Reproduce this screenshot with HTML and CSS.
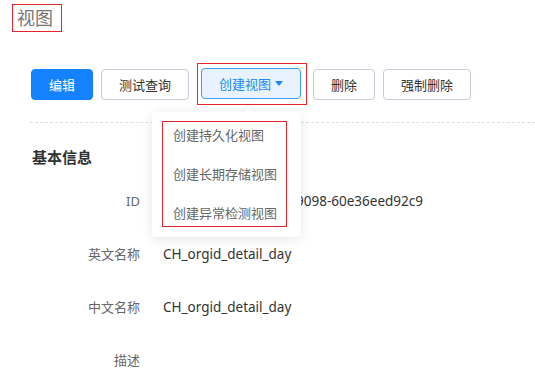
FILE: index.html
```html
<!DOCTYPE html>
<html lang="zh-CN">
<head>
    <meta charset="UTF-8">
    <meta name="viewport" content="width=device-width, initial-scale=1.0">
    <title>视图</title>
    <link rel="stylesheet" href="styles.css">
</head>
<body>
    <div class="page">
        <div class="title-box mark">
            <h1 class="title">视图</h1>
        </div>

        <div class="toolbar">
            <button type="button" class="btn btn-primary">编辑</button>
            <button type="button" class="btn">测试查询</button>
            <div class="dropdown mark">
                <button type="button" class="btn btn-active">创建视图<span class="caret"></span></button>
                <div class="dropdown-menu">
                    <ul class="menu-list mark">
                        <li>创建持久化视图</li>
                        <li>创建长期存储视图</li>
                        <li>创建异常检测视图</li>
                    </ul>
                </div>
            </div>
            <button type="button" class="btn">删除</button>
            <button type="button" class="btn">强制删除</button>
        </div>

        <div class="divider"></div>

        <section class="info">
            <h2 class="info-title">基本信息</h2>
            <div class="info-row">
                <span class="info-label">ID</span>
                <span class="info-value">4b7e21c5-a3f0-4d8e-9098-60e36eed92c9</span>
            </div>
            <div class="info-row">
                <span class="info-label">英文名称</span>
                <span class="info-value">CH_orgid_detail_day</span>
            </div>
            <div class="info-row">
                <span class="info-label">中文名称</span>
                <span class="info-value">CH_orgid_detail_day</span>
            </div>
            <div class="info-row">
                <span class="info-label">描述</span>
                <span class="info-value"></span>
            </div>
        </section>
    </div>
</body>
</html>
```

FILE: styles.css
```css
body {
    margin: 0;
    background: #fff;
    font-family: "Noto Sans", "Noto Sans CJK SC", sans-serif;
    font-size: 13px;
    color: #333;
}
.page {
    width: 535px;
    overflow: hidden;
}
/* red annotation boxes */
.mark {
    border: 1px solid #e4262c;
}
.title-box {
    display: inline-block;
    margin: 4px 0 0 12px;
    padding: 0 8px 0 4px;
}
.title {
    margin: 0;
    font-size: 18px;
    font-weight: normal;
    line-height: 26px;
    color: #777;
}
.toolbar {
    display: flex;
    align-items: center;
    gap: 8px;
    margin-top: 31px;
    padding-left: 31px;
}
.btn {
    display: inline-flex;
    align-items: center;
    height: 31px;
    padding: 0 17px;
    border: 1px solid #c8ccd8;
    border-radius: 4px;
    background: #fff;
    font-family: "Noto Sans", "Noto Sans CJK SC", sans-serif;
    font-size: 13px;
    color: #333;
    cursor: pointer;
}
.btn-primary {
    background: #1482ff;
    border-color: #1482ff;
    color: #fff;
}
.btn-active {
    background: #e8f3ff;
    border-color: #3d9df5;
    color: #1a88f5;
}
.caret {
    display: inline-block;
    margin-left: 4px;
    border-left: 4px solid transparent;
    border-right: 4px solid transparent;
    border-top: 5px solid #1a88f5;
}
.dropdown {
    position: relative;
    margin-right: -2px;
    padding: 4px 5px 5px 3px;
}
.dropdown-menu {
    position: absolute;
    top: 48px;
    left: -46px;
    width: 149px;
    box-sizing: border-box;
    padding: 9px 14px 10px 10px;
    background: #fff;
    border-radius: 4px;
    box-shadow: 0 2px 12px rgba(0, 0, 0, 0.1);
    z-index: 10;
}
.dropdown-menu::before {
    content: "";
    position: absolute;
    top: -4px;
    left: 93px;
    width: 8px;
    height: 8px;
    background: #fff;
    transform: rotate(45deg);
    box-shadow: -2px -2px 4px rgba(0, 0, 0, 0.04);
}
.menu-list {
    position: relative;
    list-style: none;
    margin: 0;
    padding: 1px 0 0 10px;
}
.menu-list li {
    line-height: 25px;
    color: #666;
    white-space: nowrap;
}
.menu-list li + li {
    margin-top: 14px;
}
.divider {
    margin: 17px 0 0 30px;
    border-top: 1px dashed #dcdfe6;
}
.info {
    padding-left: 32px;
}
.info-title {
    margin: 24px 0 7px;
    font-size: 15px;
    line-height: 20px;
    font-weight: bold;
    color: #303133;
}
.info-row {
    display: flex;
    align-items: center;
    height: 53px;
}
.info-label {
    width: 108px;
    text-align: right;
    color: #666;
}
.info-value {
    margin-left: 23px;
    font-size: 13.5px;
    color: #333;
    white-space: nowrap;
}
```
